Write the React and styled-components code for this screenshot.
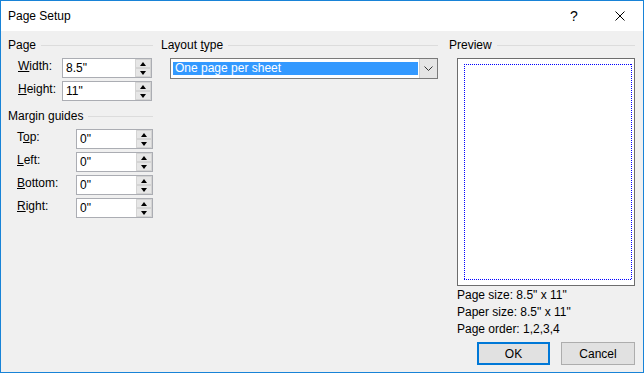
import React from 'react'
import styled, { createGlobalStyle } from 'styled-components'

const GlobalStyle = createGlobalStyle`
    html, body {
        margin: 0;
        padding: 0;
        background: #f0f0f0;
    }
    body {
        font-family: "Liberation Sans", Arial, sans-serif;
        font-size: 12px;
        color: #000;
    }
`

const Window = styled.div`
    width: 644px;
    height: 373px;
    box-sizing: border-box;
    border: 1px solid #1883d7;
    background: #f0f0f0;
    display: flex;
    flex-direction: column;
`

const TitleBar = styled.div`
    height: 30px;
    background: #fff;
    display: flex;
    align-items: center;
    padding-left: 7px;
`

const Title = styled.div`
    flex: 1;
    font-size: 12px;
`

const TitleButton = styled.div`
    width: 46px;
    height: 30px;
    display: flex;
    align-items: center;
    justify-content: center;
    font-size: 14px;
`

const Body = styled.div`
    flex: 1;
    display: flex;
    padding: 7px 8px 7px 7px;
`

const Column = styled.div`
    width: ${p => p.$width}px;
    margin-left: ${p => p.$gap || 0}px;
    display: flex;
    flex-direction: column;
`

const GroupHeader = styled.div`
    display: flex;
    align-items: center;
    height: 14px;
    line-height: 14px;
    margin-top: ${p => p.$top || 0}px;
    white-space: nowrap;
    &::after {
        content: '';
        flex: 1;
        height: 1px;
        margin-left: 5px;
        background: #dcdcdc;
    }
`

const FieldList = styled.div`
    display: flex;
    flex-direction: column;
    gap: 3px;
    margin-top: 6px;
    padding-left: ${p => p.$indent}px;
`

const FieldRow = styled.div`
    display: flex;
    align-items: center;
    height: 20px;
`

const FieldLabel = styled.div`
    width: ${p => p.$width}px;
    margin-top: -4px;
`

const SpinBox = styled.div`
    width: ${p => p.$width}px;
    height: 20px;
    box-sizing: border-box;
    border: 1px solid #abadb3;
    background: #fff;
    display: flex;
`

const SpinText = styled.div`
    flex: 1;
    padding-left: 3px;
    line-height: 18px;
`

const Spinner = styled.div`
    width: 16px;
    display: flex;
    flex-direction: column;
`

const SpinButton = styled.div`
    flex: 1;
    box-sizing: border-box;
    border: 1px solid #d4d4d4;
    background: #e6e6e6;
    display: flex;
    align-items: center;
    justify-content: center;
    &::before {
        content: '';
        width: 0;
        height: 0;
        border-left: 3.5px solid transparent;
        border-right: 3.5px solid transparent;
        ${p => p.$down
            ? 'border-top: 4px solid #000;'
            : 'border-bottom: 4px solid #000;'}
    }
`

const Select = styled.div`
    margin: 6px 0 0 9px;
    height: 21px;
    box-sizing: border-box;
    border: 1px solid #7a7a7a;
    background: #fff;
    display: flex;
`

const SelectValue = styled.div`
    flex: 1;
    margin: 3px 1px 3px 2px;
    background: #3399ff;
    color: #fff;
    padding-left: 2px;
    line-height: 13px;
`

const DropButton = styled.div`
    width: 17px;
    background: #e5e5e5;
    border-left: 1px solid #cfcfcf;
    display: flex;
    align-items: center;
    justify-content: center;
`

const PreviewBox = styled.div`
    margin: 6px 0 0 8px;
    height: 228px;
    box-sizing: border-box;
    border: 1px solid #6d6d6d;
    background: #fff;
    display: flex;
    padding: 5px 2px 5px 6px;
`

const dotsX = 'repeating-linear-gradient(90deg, #0000ff 0 1px, transparent 1px 2px)'
const dotsY = 'repeating-linear-gradient(180deg, #0000ff 0 1px, transparent 1px 2px)'

const PageOutline = styled.div`
    flex: 1;
    background:
        ${dotsX} top left / 100% 1px no-repeat,
        ${dotsX} bottom left / 100% 1px no-repeat,
        ${dotsY} top left / 1px 100% no-repeat,
        ${dotsY} top right / 1px 100% no-repeat;
`

const InfoList = styled.div`
    margin: 1px 0 0 8px;
    line-height: 17px;
`

const ButtonRow = styled.div`
    display: flex;
    justify-content: flex-end;
    gap: 11px;
    margin-top: 4px;
`

const DialogButton = styled.div`
    width: ${p => p.$primary ? 73 : 74}px;
    height: 23px;
    box-sizing: border-box;
    border: ${p => p.$primary ? '2px solid #0078d7' : '1px solid #adadad'};
    background: #e1e1e1;
    display: flex;
    align-items: center;
    justify-content: center;
`

const Key = styled.span`
    text-decoration: underline;
`

const Spin = ({ width, value }) => (
    <SpinBox $width={width}>
        <SpinText>{value}</SpinText>
        <Spinner>
            <SpinButton />
            <SpinButton $down />
        </Spinner>
    </SpinBox>
)

const pageFields = [
    { key: 'W', rest: 'idth:', value: '8.5"' },
    { key: 'H', rest: 'eight:', value: '11"' },
]

const marginFields = [
    { pre: 'T', key: 'o', rest: 'p:', value: '0"' },
    { key: 'L', rest: 'eft:', value: '0"' },
    { key: 'B', rest: 'ottom:', value: '0"' },
    { key: 'R', rest: 'ight:', value: '0"' },
]

export default function App() {
    return (
        <>
            <GlobalStyle />
            <Window>
                <TitleBar>
                    <Title>Page Setup</Title>
                    <TitleButton>?</TitleButton>
                    <TitleButton>
                        <svg width="10" height="10" viewBox="0 0 10 10">
                            <path d="M0.5 0.5 L9.5 9.5 M9.5 0.5 L0.5 9.5" stroke="#000" strokeWidth="1" />
                        </svg>
                    </TitleButton>
                </TitleBar>
                <Body>
                    <Column $width={145}>
                        <GroupHeader><span>Page</span></GroupHeader>
                        <FieldList $indent={10}>
                            {pageFields.map(f => (
                                <FieldRow key={f.key}>
                                    <FieldLabel $width={44}><Key>{f.key}</Key>{f.rest}</FieldLabel>
                                    <Spin width={90} value={f.value} />
                                </FieldRow>
                            ))}
                        </FieldList>
                        <GroupHeader $top={8}><span>Margin guides</span></GroupHeader>
                        <FieldList $indent={9}>
                            {marginFields.map(f => (
                                <FieldRow key={f.key}>
                                    <FieldLabel $width={59}>{f.pre}<Key>{f.key}</Key>{f.rest}</FieldLabel>
                                    <Spin width={77} value={f.value} />
                                </FieldRow>
                            ))}
                        </FieldList>
                    </Column>
                    <Column $width={277} $gap={8}>
                        <GroupHeader><span>Layout <Key>t</Key>ype</span></GroupHeader>
                        <Select>
                            <SelectValue>One page per sheet</SelectValue>
                            <DropButton>
                                <svg width="9" height="5" viewBox="0 0 9 5">
                                    <path d="M0.5 0.5 L4.5 4.5 L8.5 0.5" stroke="#333" fill="none" strokeWidth="1" />
                                </svg>
                            </DropButton>
                        </Select>
                    </Column>
                    <Column $width={186} $gap={11}>
                        <GroupHeader><span>Preview</span></GroupHeader>
                        <PreviewBox>
                            <PageOutline />
                        </PreviewBox>
                        <InfoList>
                            <div>Page size: 8.5" x 11"</div>
                            <div>Paper size: 8.5" x 11"</div>
                            <div>Page order: 1,2,3,4</div>
                        </InfoList>
                        <ButtonRow>
                            <DialogButton $primary>OK</DialogButton>
                            <DialogButton>Cancel</DialogButton>
                        </ButtonRow>
                    </Column>
                </Body>
            </Window>
        </>
    )
}
